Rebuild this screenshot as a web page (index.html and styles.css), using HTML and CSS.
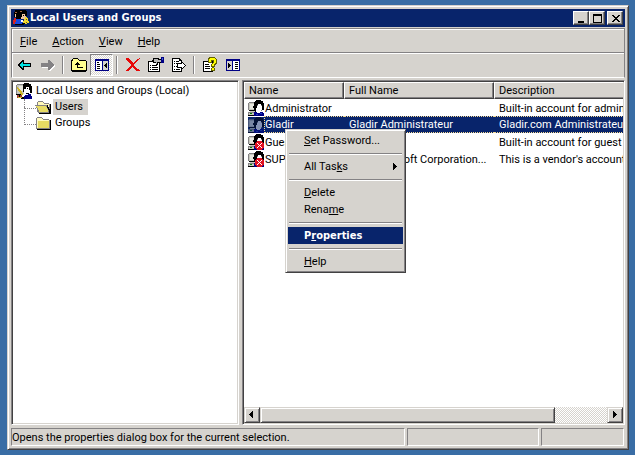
FILE: index.html
```html
<!DOCTYPE html>
<html lang="en">
<head>
<meta charset="utf-8">
<title>Local Users and Groups</title>
<link rel="stylesheet" href="styles.css">
</head>
<body>
<svg width="0" height="0" class="defs" aria-hidden="true">
  <defs>
    <symbol id="user" viewBox="0 0 16 16">
      <path fill="#848284" d="M1 2h6v1H1zM0 3h1v7H0zM0 12h8v1H0zM0 13h1v2H0z"/>
      <path fill="#c6c7bd" d="M1 3h6v7H1zM1 13h7v2H1zM2 11h5v1H2z"/>
      <path fill="#e7e7de" d="M2 4h4v5H2z"/>
      <path fill="#000" d="M8 0h5v1H8zM7 1h8v1H7zM6 2h9v1H6zM6 3h10v3H6zM5 6h4v2H5zM6 8h2v2H6zM1 10h6v1H1zM14 6h2v4h-2zM0 15h7v1H0zM7 10h1v2H7z"/>
      <path fill="#fff" d="M10 4h3v2h-3zM9 6h5v2H9zM8 8h6v2H8zM8 10h5v2H8zM9 12h3v1H9z"/>
      <path fill="#848284" d="M13 5h1v1h-1zM13 10h1v1h-1zM9 5h1v1H9z"/>
      <path fill="#000084" d="M6 12h3v1h3v-1h3v1h1v3H6z"/>
      <path fill="#2040c0" d="M8 14h2v1H8zM12 13h2v1h-2z"/>
      <path fill="#008200" d="M2 13h2v1H2z"/>
    </symbol>
    <symbol id="denied" viewBox="0 0 16 16">
      <use href="#user"/>
      <path fill="#e01020" d="M9 7h5v1h1v1h1v5h-1v1h-1v1H9v-1H8v-1H7V9h1V8h1z"/>
      <path fill="#fff" d="M9 9h1v1h1v1h1v-1h1V9h1v1h-1v1h-1v1h1v1h1v1h-1v-1h-1v-1h-1v1h-1v1H9v-1h1v-1h1v-1h-1v-1H9z"/>
    </symbol>
    <symbol id="root" viewBox="0 0 16 16">
      <path fill="#848284" d="M1 1h6v1H1zM0 2h1v9H0z"/>
      <path fill="#c6c7bd" d="M1 2h7v9H1z"/>
      <path fill="#e7e7de" d="M3 3h4v5H3z"/>
      <path fill="#000" d="M8 0h5v1h2v2h1v7h-2V8h-1V4h-3v2H8v3H7V1h1zM0 11h6v1H0zM1 12h3v2H1zM5 14h3v2H5z"/>
      <path fill="#fff" d="M10 4h3v3h1v3h-1v2H9V9H8V7h2z"/>
      <path fill="#000" d="M11 5h1v1h-1zM10 10h3v1h-3z"/>
      <path fill="#d0b828" d="M1 4h1v1h1v1h1v1h1v1h1v2h1v2H5v-1H4V9H3V8H2V6H1z"/>
      <path fill="#000084" d="M9 12h3v-1h3v2h1v3H8v-3h1z"/>
      <path fill="#a04030" d="M1 12h2v3H1zM4 12h2v2H4z"/>
      <path fill="#d0b828" d="M2 14h4v1H2z"/>
    </symbol>
    <symbol id="folder" viewBox="0 0 16 16">
      <path fill="#848284" d="M2 2h5v1h1v1h6v1h1v9H1V3h1z"/>
      <path fill="#fffbc0" d="M2 3h5v1h1v1h6v8H2z"/>
      <path fill="#e7db63" d="M3 6h11v7H3z"/>
      <path fill="#000" d="M15 5h1v10H2v-1h13z"/>
    </symbol>
    <symbol id="open" viewBox="0 0 16 16">
      <path fill="#848284" d="M3 2h5v1h1v1h5v1h1v9H3l-1-1V7H0V6h2V3h1z"/>
      <path fill="#fff8b8" d="M3 3h5v1h1v1h5v8H3z"/>
      <path fill="#848284" d="M0 6h12v2h1v2h1v3H3v-2H2V9H1V7H0z"/>
      <path fill="#e7db63" d="M1 7h10v1h1v2h1v3H4v-2H3V9H2V8H1z"/>
      <path fill="#000" d="M15 5h1v10H4v-1h11zM12 6h1v2h1v2h1v4h-1v-3h-1V9h-1z"/>
    </symbol>
  </defs>
</svg>
<main class="window">
  <header class="title">
    <svg class="icon" viewBox="0 0 16 16" aria-hidden="true">
      <path fill="#000" d="M2 0h11v1h1v5h-2v3H3V7H1V2h1z"/>
      <path fill="#a06840" d="M2 2h2v1H2zM7 1h2v1H7z"/>
      <path fill="#f0c8a0" d="M2 4h1v3H2zM9 4h3v2h1v1h-1v2H8V7h1z"/>
      <path fill="#000" d="M10 5h1v1h-1z"/>
      <path fill="#d82020" d="M1 8h2v4H1zM0 10h2v4H0z"/>
      <path fill="#1848e0" d="M3 9h5v5H3zM2 12h8v2H2z"/>
      <path fill="#000" d="M2 14h9v1H2zM9 13h3v1H9z"/>
      <path fill="#f0d830" d="M12 7h2v1h1v3h1v2h-2v1h-2v-1h-2v-2h1V9h1z"/>
      <path fill="#fff" d="M8 10h2v2H8z"/>
      <path fill="#705810" d="M13 9h1v1h-1zM13 12h1v1h-1z"/>
    </svg>
    <h1>Local Users and Groups</h1>
    <button class="cap" aria-label="Minimize"><svg viewBox="0 0 12 10"><path d="M2 7h6v2H2z"/></svg></button>
    <button class="cap" aria-label="Maximize"><svg viewBox="0 0 12 10"><path fill-rule="evenodd" d="M1 0h9v9H1zM2 2v6h7V2z"/></svg></button>
    <button class="cap close" aria-label="Close"><svg viewBox="0 0 12 10"><path d="M2 1h2v1h1v1h2V2h1V1h2v1H9v1H8v1H7v1h1v1h1v1h1v1H8V7H7V6H5v1H4v1H2V7h1V6h1V5h1V4H4V3H3V2H2z"/></svg></button>
  </header>
  <div class="bars">
    <nav class="menubar">
      <button><u>F</u>ile</button>
      <button><u>A</u>ction</button>
      <button><u>V</u>iew</button>
      <button><u>H</u>elp</button>
    </nav>
    <div class="toolbar" role="toolbar">
      <button aria-label="Back"><svg viewBox="0 0 16 16"><path fill="#000" d="M5 3h2v3h7v4H7v3H5v-1H4v-1H3v-1H2V9H1V7h1V6h1V5h1V4h1z"/><path fill="#00e0e0" d="M5 5h1v2h7v2H6v2H5v-1H4V9H3V7h1V6h1z"/></svg></button>
      <button aria-label="Forward"><svg viewBox="0 0 16 16"><path fill="#fff" d="M10 4h1v1h1v1h1v1h1v1h1v2h-1v1h-1v1h-1v1h-1v1H9v-3H2v-1h8z"/><path fill="#848284" d="M8 3h2v1h1v1h1v1h1v1h1v2h-1v1h-1v1h-1v1h-1v1H8v-3H1V6h7z"/></svg></button>
      <hr>
      <button aria-label="Up one level"><svg viewBox="0 0 16 16"><path fill="#000" d="M2 1h5v1h1v1h7v1h1v10h-1v1H1v-1H0V3h1V2h1z"/><path fill="#ffff90" d="M2 2h5v1h1v1h7v9H1V4h1z"/><path fill="#000" d="M6 5h1v1h1v1h1v1H7v2h5v1H6V8H4V7h1V6h1z"/></svg></button>
      <button class="on" aria-label="Show console tree" aria-pressed="true"><svg viewBox="0 0 16 16"><path fill="#000084" d="M1 2h14v12H1z"/><path fill="#fff" d="M2 4h6v9H2z"/><path fill="#d6d3ce" d="M9 4h5v9H9z"/><path fill="#000" d="M3 5h2v1H3zM3 7h3v1H3zM3 9h3v1H3zM3 11h3v1H3zM12 6h1v5h-1v-1h-1V9h-1V8h1V7h1z"/></svg></button>
      <hr>
      <button aria-label="Delete"><svg viewBox="0 0 16 16"><path fill="#e70808" d="M1 1h3v1h1v1h1v1h1v1h1v1h1V5h1V4h1V3h1V2h2V1h1v1h-1v1h-1v1h-1v1h-1v1h-1v1h-1v2h1v1h1v1h1v1h2v1h1v1h-4v-1h-1v-1H9v-1H8v-1H7v1H6v1H5v1H4v1H1v-1h1v-1h1v-1h1v-1h1V9h1V7H5V6H4V5H3V4H2V3H1z"/></svg></button>
      <button aria-label="Properties"><svg viewBox="0 0 16 16"><path fill="#000" d="M0 4h5v1h7v10H0z"/><path fill="#fff" d="M1 5h4v1h6v8H1z"/><path fill="#000" d="M2 8h1v1H2zM4 8h5v1H4zM2 10h1v1H2zM4 10h6v1H4zM2 12h1v1H2zM4 12h6v1H4z"/><path fill="#000" d="M5 1h6v1h3v4h-4v2H8V6H6V5H4V3h1z"/><path fill="#b8b8b8" d="M6 2h4v1h3v2H9v2H8V5H6z"/><path fill="#000084" d="M13 0h3v6h-3z"/><path fill="#4060d0" d="M14 1h1v2h-1z"/></svg></button>
      <button aria-label="Export list"><svg viewBox="0 0 16 16"><path fill="#000" d="M1 1h8v1h1v1h1v12H1z"/><path fill="#fff" d="M2 2h6v2h2v10H2z"/><path fill="#000" d="M3 4h1v1H3zM5 4h3v1H5zM3 6h1v1H3zM5 6h4v1H5zM3 9h1v1H3zM5 9h2v1H5zM3 12h1v1H3zM5 12h4v1H5z"/><path fill="#000" d="M10 4h1v1h1v1h1v1h1v1h1v1h-1v1h-1v1h-1v1h-1v1h-1v-2H6V6h4z"/><path fill="#fff" d="M7 7h4V6h1v1h1v1h1v1h-1v1h-1v1h-1v-1H7z"/></svg></button>
      <hr>
      <button aria-label="Help"><svg viewBox="0 0 16 16"><path fill="#000" d="M1 4h10v11H1z"/><path fill="#fff" d="M2 5h8v9H2z"/><path fill="#000" d="M3 7h4v1H3zM3 9h5v1H3zM3 11h5v1H3z"/><path fill="#636100" d="M7 0h6v1h1v1h1v5h-1v1h-1v2h-1v1h1v3H9v-3h1v-1H9V7h1V6h1V4h-1v2H6V1h1z"/><path fill="#ffff00" d="M8 1h5v1h1v4h-1v1h-1v2h-2V7h1V6h1V3H9v2H7V2h1zM10 11h2v2h-2z"/></svg></button>
      <button aria-label="Show action pane"><svg viewBox="0 0 16 16"><path fill="#000084" d="M1 2h14v12H1z"/><path fill="#d6d3ce" d="M2 4h5v9H2z"/><path fill="#fff" d="M8 4h6v9H8z"/><path fill="#000" d="M3 6h1v1h1v1h1v1H5v1H4v1H3zM10 5h3v1h-3zM10 7h3v1h-3zM10 9h3v1h-3zM10 11h3v1h-3z"/></svg></button>
    </div>
  </div>
  <div class="panes">
    <section class="pane tree" aria-label="Console tree">
      <div class="node"><svg class="icon"><use href="#root"/></svg><span>Local Users and Groups (Local)</span></div>
      <ul>
        <li class="node"><svg class="icon"><use href="#open"/></svg><span class="current">Users</span></li>
        <li class="node"><svg class="icon"><use href="#folder"/></svg><span>Groups</span></li>
      </ul>
    </section>
    <section class="pane list" aria-label="Users">
      <div class="rows">
        <table>
          <colgroup><col class="c-name"><col class="c-full"><col class="c-desc"></colgroup>
          <thead><tr><th>Name</th><th>Full Name</th><th>Description</th></tr></thead>
          <tbody>
            <tr><td><div class="name"><svg class="icon"><use href="#user"/></svg><span>Administrator</span></div></td><td></td><td>Built-in account for administering the</td></tr>
            <tr class="selected"><td><div class="name"><svg class="icon"><use href="#user"/></svg><span>Gladir</span></div></td><td>Gladir Administrateur</td><td>Gladir.com Administrateur</td></tr>
            <tr><td><div class="name"><svg class="icon"><use href="#denied"/></svg><span>Guest</span></div></td><td></td><td>Built-in account for guest access to</td></tr>
            <tr><td><div class="name"><svg class="icon"><use href="#denied"/></svg><span>SUPPORT_38...</span></div></td><td>CN=Microsoft Corporation...</td><td>This is a vendor's account for the</td></tr>
          </tbody>
        </table>
      </div>
      <div class="scroll">
        <button aria-label="Scroll left"><svg viewBox="0 0 12 12"><path d="M7 2v7H6V8H5V7H4V6H3V5h1V4h1V3h1V2z"/></svg></button>
        <div class="track"><div class="thumb"></div></div>
        <button aria-label="Scroll right"><svg viewBox="0 0 12 12"><path d="M4 2h1v1h1v1h1v1h1v1H7v1H6v1H5v1H4z"/></svg></button>
      </div>
      <div class="popup" role="menu">
        <button role="menuitem"><u>S</u>et Password...</button>
        <hr>
        <button role="menuitem" class="sub">All Tas<u>k</u>s<svg viewBox="0 0 4 7"><path d="M0 0h1v1h1v1h1v1h1v1H3v1H2v1H1v1H0z"/></svg></button>
        <hr>
        <button role="menuitem"><u>D</u>elete</button>
        <button role="menuitem">Rena<u>m</u>e</button>
        <hr>
        <button role="menuitem" class="active">P<u>r</u>operties</button>
        <hr>
        <button role="menuitem"><u>H</u>elp</button>
      </div>
    </section>
  </div>
  <footer class="status">
    <span class="message">Opens the properties dialog box for the current selection.</span>
    <span class="mid"></span>
    <span class="end"></span>
  </footer>
</main>
</body>
</html>
```
FILE: styles.css
```css
* { box-sizing: border-box; }
body {
  margin: 0;
  height: 100vh;
  padding: 5px 6px 5px 7px;
  background: #396da5;
  color: #000;
  font: 11px/17px Roboto, Tahoma, sans-serif;
  white-space: nowrap;
  overflow: hidden;
}
.defs { position: absolute; }
svg { display: block; shape-rendering: crispEdges; }
button { margin: 0; padding: 0; border: 0; background: none; color: inherit; font: inherit; }
hr { margin: 0; border: 0; }
ul { margin: 0; padding: 0; list-style: none; }
u { text-underline-offset: 1px; text-decoration-thickness: 1px; text-decoration-skip-ink: none; }
.icon { flex: none; width: 16px; height: 16px; }

.window {
  display: flex;
  flex-direction: column;
  height: 100%;
  padding: 3px;
  background: #d6d3ce;
  border: 1px solid;
  border-color: #d6d3ce #424142 #424142 #d6d3ce;
  box-shadow: inset 1px 1px #fff, inset -1px -1px #848284;
}
.title {
  display: flex;
  align-items: center;
  height: 18px;
  margin-bottom: 1px;
  padding: 0 2px;
  background: #08246b;
  color: #fff;
}
.title h1 { flex: 1; margin: 0 0 0 1px; font: bold 11px/18px "DejaVu Sans Condensed", Tahoma, sans-serif; }
.cap {
  width: 16px;
  height: 14px;
  padding: 2px;
  background: #d6d3ce;
  border: 1px solid;
  border-color: #fff #424142 #424142 #fff;
  box-shadow: inset -1px -1px #848284;
}
.cap svg { width: 12px; height: 10px; }
.close { margin-left: 2px; }

.bars { border: 1px solid #848284; border-bottom-color: #fff; box-shadow: inset 1px 1px #fff; }
.menubar { display: flex; align-items: center; gap: 15px; height: 24px; padding: 2px 8px 0; border-bottom: 1px solid #848284; }
.toolbar { display: flex; align-items: flex-start; height: 24px; padding-left: 1px; border-top: 1px solid #fff; }
.toolbar button { display: grid; place-items: center; width: 23px; height: 22px; }
.toolbar svg { width: 16px; height: 16px; }
.toolbar hr { width: 2px; height: 18px; margin: 2px 3px; border-left: 1px solid #848284; border-right: 1px solid #fff; }
.toolbar .on {
  border: 1px solid;
  border-color: #848284 #fff #fff #848284;
  background: repeating-conic-gradient(#fff 0 25%, #d6d3ce 0 50%) 0 0 / 2px 2px;
}

.panes { flex: 1; display: flex; gap: 3px; min-height: 0; margin: 2px 0 3px; }
.pane {
  background: #fff;
  border: 1px solid;
  border-color: #848284 #fff #fff #848284;
  box-shadow: inset 1px 1px #424142, inset -1px -1px #d6d3ce;
}
.tree { flex: 0 0 228px; padding: 2px 4px; }
.list { flex: 1; position: relative; display: flex; flex-direction: column; min-width: 0; padding: 1px; }
.node { display: flex; align-items: center; gap: 2px; height: 16px; }
.node span { padding: 0 2px; line-height: 16px; }
.node .current { padding-right: 5px; background: #d6d3ce; }
.tree li { position: relative; margin-left: 19px; }
.tree li::before {
  content: "";
  position: absolute;
  left: -11px;
  top: 0;
  width: 11px;
  height: 9px;
  border: dotted #848284;
  border-width: 0 0 1px 1px;
}
.tree li + li::before { top: -8px; height: 17px; }

.rows { flex: 1; overflow: hidden; }
table { width: 452px; table-layout: fixed; border-collapse: separate; border-spacing: 0; }
.c-name { width: 100px; }
.c-full { width: 150px; }
th {
  height: 17px;
  padding: 1px 4px 0;
  background: #d6d3ce;
  border: 1px solid;
  border-color: #fff #424142 #424142 #fff;
  box-shadow: inset -1px -1px #848284;
  font-weight: normal;
  line-height: 14px;
  text-align: left;
}
td { height: 17px; padding: 2px 5px 0; overflow: hidden; line-height: 15px; vertical-align: top; border: 0; }
td:first-child { padding: 0 0 0 4px; }
.name { display: flex; align-items: center; height: 17px; }
.name span { flex: 1; min-width: 0; height: 17px; padding: 2px 0 0 1px; line-height: 15px; overflow: hidden; }
.selected td { padding-top: 1px; background: #08246b; color: #fff; line-height: 14px; border: dotted #f7db94; border-width: 1px 0; }
.selected td:first-child { padding-top: 0; background: #fff; border: 0; }
.selected .name span { background: #08246b; border: 1px dotted #f7db94; border-right: 0; padding: 1px 0 0; line-height: 14px; }
.selected .icon { background: #08246b; }
.selected .icon use { opacity: .5; }

.scroll { display: flex; height: 16px; }
.scroll button, .thumb {
  background: #d6d3ce;
  border: 1px solid;
  border-color: #d6d3ce #424142 #424142 #d6d3ce;
  box-shadow: inset 1px 1px #fff, inset -1px -1px #848284;
}
.scroll button { width: 16px; padding: 1px; }
.scroll svg { width: 12px; height: 12px; }
.track { flex: 1; background: repeating-conic-gradient(#fff 0 25%, #d6d3ce 0 50%) 0 0 / 2px 2px; }
.thumb { width: 85%; height: 16px; }

.popup {
  position: absolute;
  left: 42px;
  top: 48px;
  width: 121px;
  padding: 2px;
  background: #d6d3ce;
  border: 1px solid;
  border-color: #d6d3ce #424142 #424142 #d6d3ce;
  box-shadow: inset 1px 1px #fff, inset -1px -1px #848284;
}
.popup button { display: block; width: 100%; height: 17px; padding: 0 6px 0 16px; line-height: 17px; text-align: left; }
.popup .sub { display: flex; align-items: center; }
.popup .sub svg { width: 4px; height: 7px; margin-left: auto; }
.popup hr { height: 2px; margin: 4px 1px 3px; border-top: 1px solid #848284; border-bottom: 1px solid #fff; }
.popup .active { background: #08246b; color: #fff; font: bold 11px/17px "DejaVu Sans Condensed", Tahoma, sans-serif; }

.status { display: flex; gap: 2px; height: 18px; margin-right: 1px; }
.status span { border: 1px solid; border-color: #848284 #fff #fff #848284; line-height: 17px; }
.message { flex: 1; }
.mid { width: 132px; }
.end { width: 83px; }
```
